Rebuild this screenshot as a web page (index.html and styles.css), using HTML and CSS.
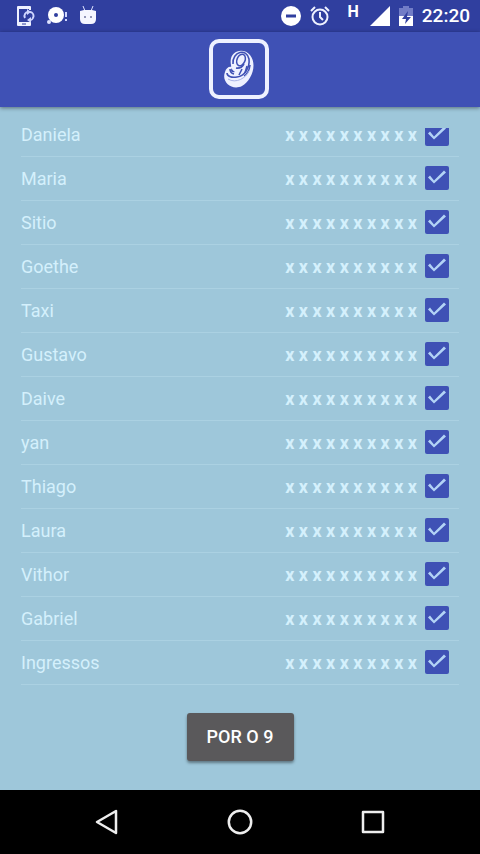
FILE: index.html
```html
<!DOCTYPE html>
<html lang="pt">
<head>
<meta charset="utf-8">
<meta name="viewport" content="width=device-width, initial-scale=1">
<title>Por o 9</title>
<link rel="stylesheet" href="styles.css">
</head>
<body>
<div class="status">
  <div class="status-group notices">
    <svg width="18" height="22" viewBox="0 0 18 22"><path d="M13 5V2H1v18h12v-3" fill="none" stroke="#eef1ff" stroke-width="2" stroke-linejoin="round"/><path d="M1 1h12v3H1zM1 17h12v4H1z" fill="#eef1ff"/><path d="M8 13a4 4 0 0 1 4-6M13 7a4 4 0 0 1-1 8" fill="none" stroke="#cfd6ff" stroke-width="2"/><path d="M10 4l4 3-4 3zM14 12v6l-4-3z" fill="#cfd6ff"/><path d="M5 19h4" stroke="#303f9f"/></svg>
    <svg width="22" height="20" viewBox="0 0 22 20"><circle cx="10" cy="9" r="8" fill="#fff"/><circle cx="10" cy="9" r="2" fill="#303f9f"/><circle cx="3" cy="16" r="2" fill="#dfe4ff"/><path d="M20 6v5M20 13v2" stroke="#cfd6ff" stroke-width="2"/></svg>
    <svg width="18" height="20" viewBox="0 0 18 20"><path d="M4 0l2 5M14 0l-2 5" stroke="#dfe4ff" stroke-width="1"/><path d="M1 5l4-1h8l4 1v8q0 5-5 5H6q-5 0-5-5z" fill="#f5f6ff"/><circle cx="6" cy="11" r="1" fill="#71769f"/><circle cx="12" cy="11" r="1" fill="#71769f"/></svg>
  </div>
  <div class="status-group system">
    <svg width="20" height="20" viewBox="0 0 20 20"><circle cx="10" cy="10" r="10" fill="#fff"/><path d="M5 10h10" stroke="#303f9f" stroke-width="3"/></svg>
    <svg width="20" height="20" viewBox="0 0 20 20" fill="none" stroke="#eef1ff" stroke-width="2"><circle cx="10" cy="11" r="7.5"/><path d="M10 6v5l3 3M1 5l4-4M19 5l-4-4"/></svg>
    <span class="network">H</span>
    <svg width="20" height="20" viewBox="0 0 20 20"><path d="M20 0v20H0z" fill="#fff"/></svg>
    <svg width="14" height="20" viewBox="0 0 14 20"><path d="M4 0h6v2h4v8H0V2h4z" fill="#727dc7"/><path d="M0 10h14v10H0z" fill="#fff"/><path d="M9 5l-6 8h4l-1 5 6-7H8z" fill="#303f9f"/></svg>
    <time class="clock">22:20</time>
  </div>
</div>
<header class="appbar">
  <svg width="60" height="60" viewBox="0 0 60 60"><rect x="2" y="2" width="56" height="56" rx="8" fill="none" stroke="#eef1ff" stroke-width="4"/><path d="M22 26C19 11 35 8 41 16C49 26 42 42 33 47C23 52 12 43 16 33C17 29 20 27 23 28C21 32 22 34 26 33C23 31 22 29 22 26z" fill="#eef1ff"/><path d="M24 25C23 12 38 9 40 20C41 28 36 37 28 38C22 39 18 37 18 34" fill="none" stroke="#3f51b5" stroke-width="1.6"/><ellipse cx="32" cy="21" rx="4" ry="6" transform="rotate(24 32 21)" fill="none" stroke="#3f51b5" stroke-width="1.5"/><path d="M27 29q5 1 8-4M33 30l-3 6M38 27l-2 7M41 26q-1 8-6 11M21 30q0 4 4 5" fill="none" stroke="#3f51b5" stroke-width="1.6"/><path d="M19 40c8 5 18-1 21-8" fill="none" stroke="#a8b3e6" stroke-width="1"/></svg>
</header>
<main class="content">
  <ul class="contacts">
    <li class="contact"><label for="c1">Daniela</label><span class="number">x x x x x x x x x x</span><input class="check" type="checkbox" id="c1" checked></li>
    <li class="contact"><label for="c2">Maria</label><span class="number">x x x x x x x x x x</span><input class="check" type="checkbox" id="c2" checked></li>
    <li class="contact"><label for="c3">Sitio</label><span class="number">x x x x x x x x x x</span><input class="check" type="checkbox" id="c3" checked></li>
    <li class="contact"><label for="c4">Goethe</label><span class="number">x x x x x x x x x x</span><input class="check" type="checkbox" id="c4" checked></li>
    <li class="contact"><label for="c5">Taxi</label><span class="number">x x x x x x x x x x</span><input class="check" type="checkbox" id="c5" checked></li>
    <li class="contact"><label for="c6">Gustavo</label><span class="number">x x x x x x x x x x</span><input class="check" type="checkbox" id="c6" checked></li>
    <li class="contact"><label for="c7">Daive</label><span class="number">x x x x x x x x x x</span><input class="check" type="checkbox" id="c7" checked></li>
    <li class="contact"><label for="c8">yan</label><span class="number">x x x x x x x x x x</span><input class="check" type="checkbox" id="c8" checked></li>
    <li class="contact"><label for="c9">Thiago</label><span class="number">x x x x x x x x x x</span><input class="check" type="checkbox" id="c9" checked></li>
    <li class="contact"><label for="c10">Laura</label><span class="number">x x x x x x x x x x</span><input class="check" type="checkbox" id="c10" checked></li>
    <li class="contact"><label for="c11">Vithor</label><span class="number">x x x x x x x x x x</span><input class="check" type="checkbox" id="c11" checked></li>
    <li class="contact"><label for="c12">Gabriel</label><span class="number">x x x x x x x x x x</span><input class="check" type="checkbox" id="c12" checked></li>
    <li class="contact"><label for="c13">Ingressos</label><span class="number">x x x x x x x x x x</span><input class="check" type="checkbox" id="c13" checked></li>
  </ul>
  <button class="action" type="button">POR O 9</button>
</main>
<nav class="navbar">
  <button class="key" type="button" aria-label="Voltar"><svg width="26" height="26" viewBox="0 0 26 26"><path d="M22 2v22L3 13z"/></svg></button>
  <button class="key" type="button" aria-label="Início"><svg width="26" height="26" viewBox="0 0 26 26"><circle cx="13" cy="13" r="11.2"/></svg></button>
  <button class="key" type="button" aria-label="Recentes"><svg width="26" height="26" viewBox="0 0 26 26"><path d="M3 3h20v20H3z"/></svg></button>
</nav>
</body>
</html>
```
FILE: styles.css
```css
* { box-sizing: border-box; }

body {
  margin: 0;
  min-height: 100vh;
  display: flex;
  flex-direction: column;
  background: #9ec7da;
  font-family: Roboto, sans-serif;
  font-size: 18px;
  line-height: 24px;
}

svg { display: block; }

.status {
  display: flex;
  justify-content: space-between;
  align-items: center;
  height: 32px;
  padding: 0 10px 0 17px;
  background: #303f9f;
  color: #fff;
}

.status-group { display: flex; align-items: center; }
.notices { gap: 11px; }
.system { gap: 9px; }
.network {
  align-self: flex-start;
  margin: 0 2px 0 8px;
  font-size: 16px;
  font-weight: 700;
  line-height: 16px;
}
.clock { font-size: 19px; font-weight: 500; }

.appbar {
  display: flex;
  justify-content: center;
  align-items: center;
  height: 75px;
  padding: 0 2px 2px 0;
  background: #3f51b5;
  box-shadow: 0 1px 4px rgba(0, 0, 0, .45);
}

.content {
  flex: 1;
  display: flex;
  flex-direction: column;
  align-items: center;
  padding: 21px 21px 28px;
}

.contacts {
  align-self: stretch;
  margin: 0 0 28px;
  padding: 0;
  overflow: hidden;
  list-style: none;
}

.contact {
  display: flex;
  align-items: center;
  height: 44px;
  padding-right: 10px;
  border-bottom: 1px solid #abd1e2;
  color: #d4f0fc;
  line-height: 14px;
}

/* The list is scrolled part of the way past its first entry. */
.contact:first-child { margin-top: -15px; }

.contact label { flex: 1; }
.number { margin-right: 8px; font-weight: 700; }

.check {
  appearance: none;
  width: 24px;
  height: 24px;
  margin: 0 0 2px;
  border-radius: 2px;
  background: #3f51b5;
}

.check:checked::before {
  content: "";
  display: block;
  width: 24px;
  height: 24px;
  background: #b3d3f6;
  clip-path: polygon(3px 12px, 5px 10px, 9px 15px, 19px 5px, 21px 7px, 9px 18px);
}

.action {
  width: 107px;
  height: 48px;
  padding: 0;
  border: 0;
  border-radius: 3px;
  background: #5a595b;
  color: #fff;
  font: 500 18px/24px Roboto, sans-serif;
  box-shadow: 0 2px 3px rgba(0, 0, 0, .4);
}

.navbar {
  display: flex;
  justify-content: center;
  height: 64px;
  padding: 0 40px;
  background: #000;
}

.key {
  flex: 1;
  display: flex;
  justify-content: center;
  align-items: center;
  padding: 0;
  border: 0;
  background: none;
}

.key svg {
  fill: none;
  stroke: #eee;
  stroke-width: 2.5;
  stroke-linejoin: round;
}
```
